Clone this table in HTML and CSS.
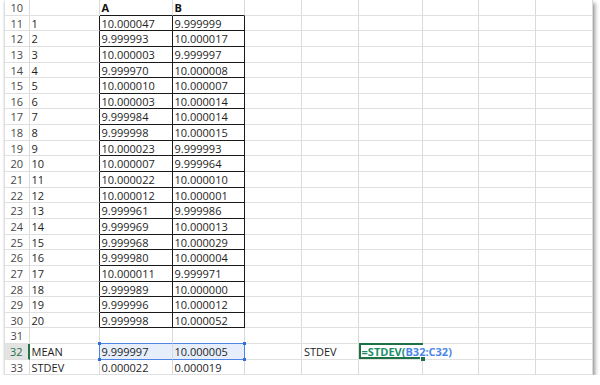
FILE: index.html
```html
<!DOCTYPE html>
<html>
<head>
<meta charset="utf-8">
<link rel="stylesheet" href="styles.css">
</head>
<body>
<div class="sheet">
  <div class="row"><span class="h">10</span><span class="c"></span><span class="c th b">A</span><span class="c th b">B</span><span class="c"></span><span class="c"></span><span class="c"></span><span class="c"></span><span class="c"></span><span class="c"></span></div>
  <div class="row"><span class="h">11</span><span class="c tl">1</span><span class="c t">10.000047</span><span class="c t">9.999999</span><span class="c"></span><span class="c"></span><span class="c"></span><span class="c"></span><span class="c"></span><span class="c"></span></div>
  <div class="row"><span class="h">12</span><span class="c tl">2</span><span class="c t">9.999993</span><span class="c t">10.000017</span><span class="c"></span><span class="c"></span><span class="c"></span><span class="c"></span><span class="c"></span><span class="c"></span></div>
  <div class="row"><span class="h">13</span><span class="c tl">3</span><span class="c t">10.000003</span><span class="c t">9.999997</span><span class="c"></span><span class="c"></span><span class="c"></span><span class="c"></span><span class="c"></span><span class="c"></span></div>
  <div class="row"><span class="h">14</span><span class="c tl">4</span><span class="c t">9.999970</span><span class="c t">10.000008</span><span class="c"></span><span class="c"></span><span class="c"></span><span class="c"></span><span class="c"></span><span class="c"></span></div>
  <div class="row"><span class="h">15</span><span class="c tl">5</span><span class="c t">10.000010</span><span class="c t">10.000007</span><span class="c"></span><span class="c"></span><span class="c"></span><span class="c"></span><span class="c"></span><span class="c"></span></div>
  <div class="row"><span class="h">16</span><span class="c tl">6</span><span class="c t">10.000003</span><span class="c t">10.000014</span><span class="c"></span><span class="c"></span><span class="c"></span><span class="c"></span><span class="c"></span><span class="c"></span></div>
  <div class="row"><span class="h">17</span><span class="c tl">7</span><span class="c t">9.999984</span><span class="c t">10.000014</span><span class="c"></span><span class="c"></span><span class="c"></span><span class="c"></span><span class="c"></span><span class="c"></span></div>
  <div class="row"><span class="h">18</span><span class="c tl">8</span><span class="c t">9.999998</span><span class="c t">10.000015</span><span class="c"></span><span class="c"></span><span class="c"></span><span class="c"></span><span class="c"></span><span class="c"></span></div>
  <div class="row"><span class="h">19</span><span class="c tl">9</span><span class="c t">10.000023</span><span class="c t">9.999993</span><span class="c"></span><span class="c"></span><span class="c"></span><span class="c"></span><span class="c"></span><span class="c"></span></div>
  <div class="row"><span class="h">20</span><span class="c tl">10</span><span class="c t">10.000007</span><span class="c t">9.999964</span><span class="c"></span><span class="c"></span><span class="c"></span><span class="c"></span><span class="c"></span><span class="c"></span></div>
  <div class="row"><span class="h">21</span><span class="c tl">11</span><span class="c t">10.000022</span><span class="c t">10.000010</span><span class="c"></span><span class="c"></span><span class="c"></span><span class="c"></span><span class="c"></span><span class="c"></span></div>
  <div class="row"><span class="h">22</span><span class="c tl">12</span><span class="c t">10.000012</span><span class="c t">10.000001</span><span class="c"></span><span class="c"></span><span class="c"></span><span class="c"></span><span class="c"></span><span class="c"></span></div>
  <div class="row"><span class="h">23</span><span class="c tl">13</span><span class="c t">9.999961</span><span class="c t">9.999986</span><span class="c"></span><span class="c"></span><span class="c"></span><span class="c"></span><span class="c"></span><span class="c"></span></div>
  <div class="row"><span class="h">24</span><span class="c tl">14</span><span class="c t">9.999969</span><span class="c t">10.000013</span><span class="c"></span><span class="c"></span><span class="c"></span><span class="c"></span><span class="c"></span><span class="c"></span></div>
  <div class="row"><span class="h">25</span><span class="c tl">15</span><span class="c t">9.999968</span><span class="c t">10.000029</span><span class="c"></span><span class="c"></span><span class="c"></span><span class="c"></span><span class="c"></span><span class="c"></span></div>
  <div class="row"><span class="h">26</span><span class="c tl">16</span><span class="c t">9.999980</span><span class="c t">10.000004</span><span class="c"></span><span class="c"></span><span class="c"></span><span class="c"></span><span class="c"></span><span class="c"></span></div>
  <div class="row"><span class="h">27</span><span class="c tl">17</span><span class="c t">10.000011</span><span class="c t">9.999971</span><span class="c"></span><span class="c"></span><span class="c"></span><span class="c"></span><span class="c"></span><span class="c"></span></div>
  <div class="row"><span class="h">28</span><span class="c tl">18</span><span class="c t">9.999989</span><span class="c t">10.000000</span><span class="c"></span><span class="c"></span><span class="c"></span><span class="c"></span><span class="c"></span><span class="c"></span></div>
  <div class="row"><span class="h">29</span><span class="c tl">19</span><span class="c t">9.999996</span><span class="c t">10.000012</span><span class="c"></span><span class="c"></span><span class="c"></span><span class="c"></span><span class="c"></span><span class="c"></span></div>
  <div class="row"><span class="h">30</span><span class="c tl">20</span><span class="c t">9.999998</span><span class="c t">10.000052</span><span class="c"></span><span class="c"></span><span class="c"></span><span class="c"></span><span class="c"></span><span class="c"></span></div>
  <div class="row"><span class="h">31</span><span class="c"></span><span class="c sb"></span><span class="c sb"></span><span class="c"></span><span class="c"></span><span class="c"></span><span class="c"></span><span class="c"></span><span class="c"></span></div>
  <div class="row"><span class="h act">32</span><span class="c sl">MEAN</span><span class="c sel s1">9.999997</span><span class="c sel s2">10.000005</span><span class="c"></span><span class="c">STDEV</span><span class="c f"><span class="ftxt"><span class="fn">=STDEV(</span><span class="ref">B32:C32)</span></span></span><span class="c"></span><span class="c"></span><span class="c"></span></div>
  <div class="row"><span class="h">33</span><span class="c">STDEV</span><span class="c">0.000022</span><span class="c">0.000019</span><span class="c"></span><span class="c"></span><span class="c"></span><span class="c"></span><span class="c"></span><span class="c"></span></div>
</div>
</body>
</html>
```
FILE: styles.css
```css
html, body {
  margin: 0;
  padding: 0;
  background: #ffffff;
}

body {
  font-family: "Open Sans", "Noto Sans", sans-serif;
  font-size: 11px;
  color: #1e1e1e;
}

.sheet {
  margin-left: 5px;
  width: 587.7px;
  background: #ffffff;
  box-shadow: 2px 3px 4px rgba(0, 0, 0, 0.42), -1px 0 2px rgba(0, 0, 0, 0.12);
}

.row {
  display: grid;
  grid-template-columns: 24.5px 70px 73px 72.7px 56.7px 56.7px 64px 56.7px 56.7px 56.7px;
  height: 15.65px;
}

.h,
.c {
  box-sizing: border-box;
  height: 15.65px;
  line-height: 15px;
  border-right: 1px solid #dadada;
  border-bottom: 1px solid #e0e0e0;
  white-space: nowrap;
}

.h {
  text-align: center;
  color: #474747;
}

.c {
  padding: 0 2px;
}

.b {
  font-weight: 700;
  color: #111111;
}

.th {
  border-bottom-color: #1a1a1a;
}

.tl {
  border-right-color: #1a1a1a;
}

.t {
  border-right-color: #1a1a1a;
  border-bottom-color: #1a1a1a;
}

/* selection B32:C32 */
.sb {
  border-bottom-color: #4f86e6;
}

.sl {
  border-right-color: #4f86e6;
}

.sel {
  position: relative;
  background: #e7eefb;
  border-bottom-color: #4f86e6;
}

.s2 {
  border-right-color: #4f86e6;
}

.s1::before,
.s1::after,
.s2::before,
.s2::after {
  content: "";
  position: absolute;
  width: 3px;
  height: 3px;
  background: #2f6edb;
  z-index: 2;
}

.s1::before {
  left: -2px;
  top: -2px;
}

.s1::after {
  left: -2px;
  bottom: -2px;
}

.s2::before {
  right: -2px;
  top: -2px;
}

.s2::after {
  right: -2px;
  bottom: -2px;
}

/* active row header */
.act {
  background: #e3e3e3;
  color: #217346;
  border-right: 2px solid #217346;
}

/* formula cell */
.f {
  position: relative;
  padding-left: 3px;
  border-right-color: transparent;
}

.f::before {
  content: "";
  position: absolute;
  top: -1px;
  left: 0;
  right: -1px;
  bottom: 0;
  border: 2px solid #1e7145;
  border-right-width: 0;
  z-index: 1;
}

.f::after {
  content: "";
  position: absolute;
  right: -3px;
  bottom: -2px;
  width: 4px;
  height: 4px;
  background: #1e7145;
  border-left: 1px solid #ffffff;
  border-top: 1px solid #ffffff;
  z-index: 1;
}

.ftxt {
  position: relative;
  z-index: 2;
  font-weight: 700;
}

.fn {
  color: #1c8f6a;
}

.ref {
  color: #4a86e8;
}
```
